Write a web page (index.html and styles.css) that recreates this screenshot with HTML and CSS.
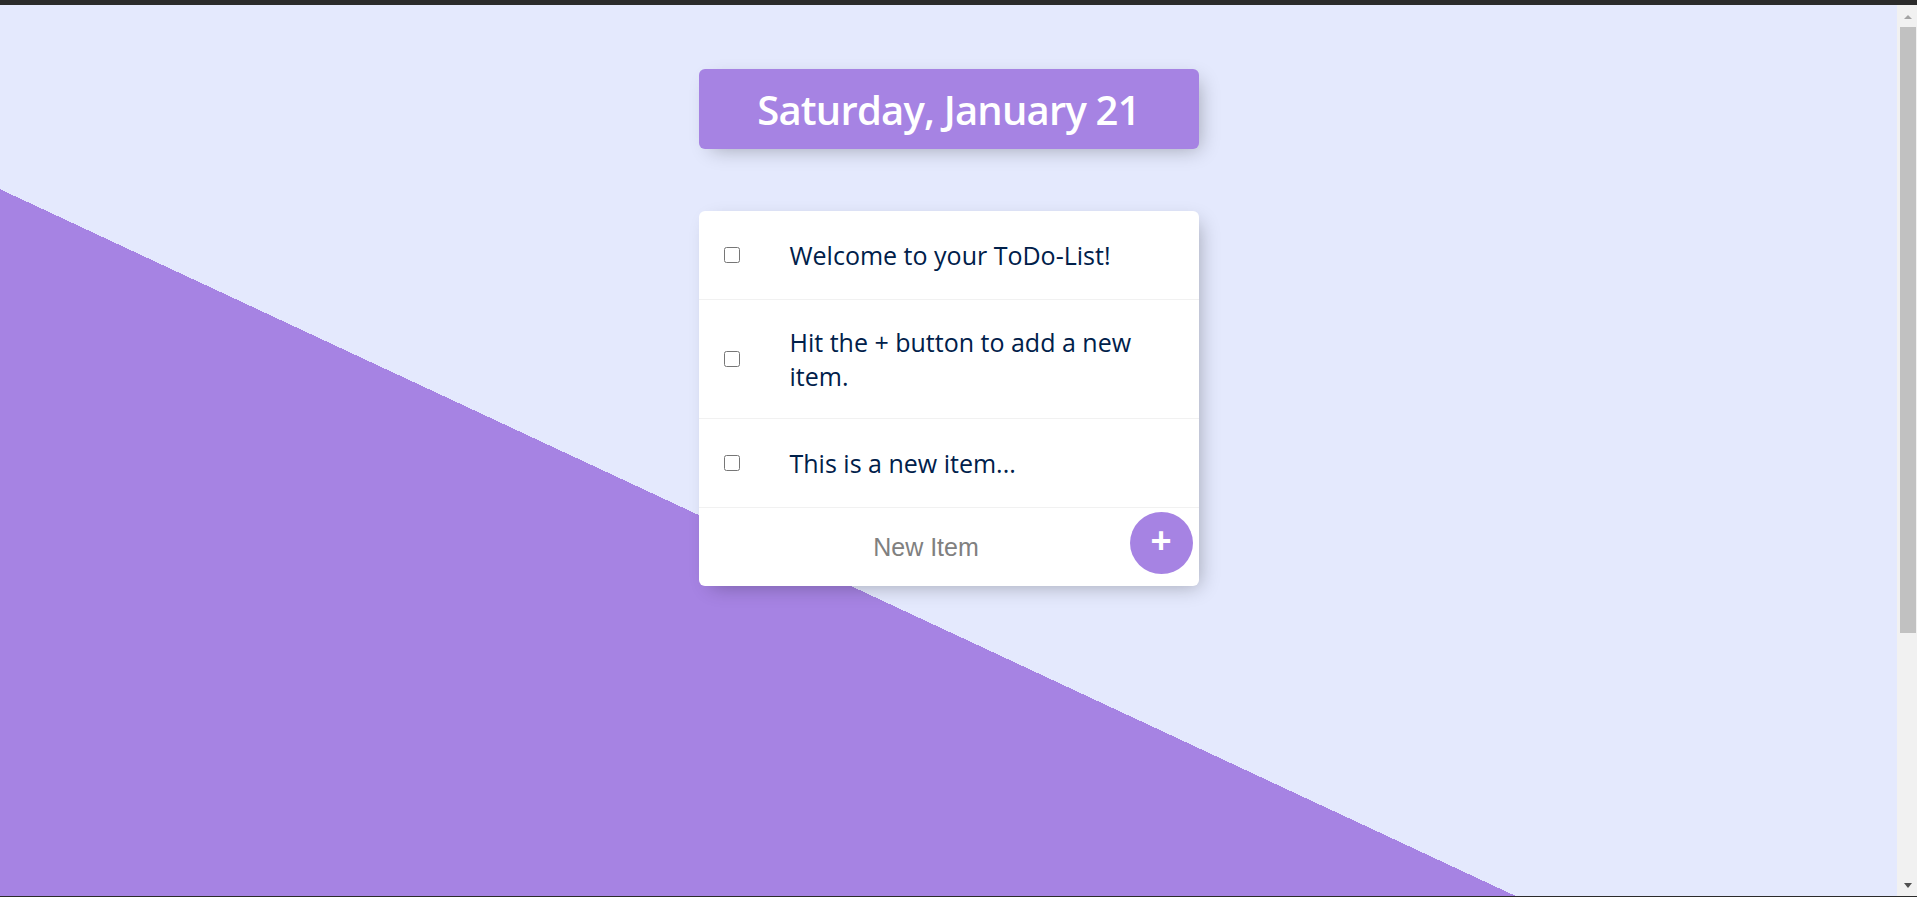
FILE: index.html
```html
<!DOCTYPE html>
<html lang="en">
<head>
<meta charset="utf-8">
<title>To-Do List</title>
<link rel="stylesheet" href="styles.css">
</head>
<body>
<div class="frame-top"></div>
<div class="window">
  <main class="page">
    <div class="box heading"><h1>Saturday, January 21</h1></div>
    <div class="box list">
      <div class="item"><input type="checkbox"><p>Welcome to your ToDo-List!</p></div>
      <div class="item"><input type="checkbox"><p>Hit the + button to add a new item.</p></div>
      <div class="item"><input type="checkbox"><p>This is a new item...</p></div>
      <form class="item new-item">
        <input type="text" name="newItem" placeholder="New Item" autocomplete="off">
        <button type="button" name="button">+</button>
      </form>
    </div>
  </main>
  <div class="scrollbar">
    <div class="arrow up"></div>
    <div class="thumb"></div>
    <div class="arrow down"></div>
  </div>
</div>
<div class="frame-bottom"></div>
</body>
</html>
```

FILE: styles.css
```css
* { box-sizing: border-box; }

html, body {
  margin: 0;
  height: 100%;
}

body {
  display: flex;
  flex-direction: column;
  overflow: hidden;
  background: #E4E9FD;
  font-family: "Open Sans", "Noto Sans", sans-serif;
}

.frame-top {
  height: 5px;
  background: #2b2b2b;
  flex: none;
}

.frame-bottom {
  height: 1px;
  background: #2b2b2b;
  flex: none;
}

.window {
  flex: 1;
  display: flex;
  min-height: 0;
}

.page {
  flex: 1;
  min-width: 0;
  display: flex;
  flex-direction: column;
  align-items: center;
  padding-top: 64px;
  background-color: #E4E9FD;
  background-image: linear-gradient(25deg, #A683E3 50%, #E4E9FD 50%);
  background-size: 100% 1253px;
  background-repeat: no-repeat;
  overflow: hidden;
}

.box {
  width: 500px;
  background: #fff;
  border-radius: 6px;
  box-shadow: 6px 6px 19px -6px rgba(0, 0, 0, 0.3);
}

.heading {
  height: 80px;
  background: #A683E3;
  display: flex;
  align-items: center;
  justify-content: center;
}

.heading h1 {
  margin: 0;
  color: #fff;
  font-size: 40px;
  font-weight: 600;
  letter-spacing: -0.8px;
}

.list {
  margin-top: 62px;
}

.item {
  min-height: 89px;
  display: flex;
  align-items: center;
  border-bottom: 1px solid #F1F1F1;
}

.item input[type="checkbox"] {
  width: 16px;
  height: 16px;
  margin: 0 25px;
  flex: none;
}

.item p {
  margin: 0;
  padding: 25px;
  font-size: 25px;
  line-height: 34px;
  color: #00204a;
}

.new-item {
  min-height: 0;
  height: 78px;
  border-bottom: 0;
  margin: 0;
}

.new-item input[type="text"] {
  margin-left: 25px;
  width: 405px;
  height: 75px;
  padding: 0;
  border: none;
  background: transparent;
  text-align: center;
  font-family: "Liberation Sans", Arial, sans-serif;
  font-size: 25px;
}

.new-item input[type="text"]::placeholder {
  color: #808080;
  opacity: 1;
}

.new-item button {
  margin-left: 1px;
  margin-bottom: 8px;
  width: 63px;
  height: 62px;
  border: 0;
  border-radius: 50%;
  background: #A683E3;
  color: #fff;
  font-family: "Liberation Sans", Arial, sans-serif;
  font-weight: 700;
  font-size: 36px;
  line-height: 1;
  padding: 0 0 4px;
  display: flex;
  align-items: center;
  justify-content: center;
}

.scrollbar {
  width: 20px;
  flex: none;
  background: #F1F1F1;
  display: flex;
  flex-direction: column;
  align-items: center;
  padding: 10px 0 8px;
}

.arrow {
  width: 0;
  height: 0;
  border-left: 4px solid transparent;
  border-right: 4px solid transparent;
  margin-left: 2px;
}

.arrow.up {
  border-bottom: 4px solid #a3a3a3;
}

.arrow.down {
  border-top: 5px solid #505050;
  margin-top: auto;
}

.thumb {
  margin-top: 8px;
  width: 16px;
  height: 606px;
  background: #c1c1c1;
  margin-left: 2px;
}
```
